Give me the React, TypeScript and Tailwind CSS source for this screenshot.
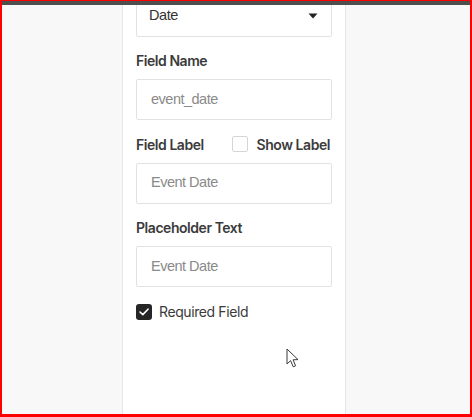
function Label({ children }: { children: React.ReactNode }) {
  return (
    <div className="h-[20px] mt-[14px] mb-[8.5px] flex items-center text-[14px] font-semibold tracking-[-0.45px] text-[#3b3b3b]">
      {children}
    </div>
  );
}

function TextInput({ placeholder }: { placeholder: string }) {
  return (
    <div className="h-[41px] border border-[#e2e2e2] rounded-[2px] bg-white flex items-center pl-[14px] text-[14.5px] tracking-[-0.5px] text-[#8a8a8a] font-['Liberation_Sans',Arial,sans-serif]">
      {placeholder}
    </div>
  );
}

function Cursor() {
  return (
    <svg
      className="absolute left-[284px] top-[347px]"
      width="14"
      height="21"
      viewBox="0 0 14 21"
    >
      <path
        d="M1 1 L1 16 L4.6 12.6 L7.2 18.8 L9.6 17.8 L7.1 11.8 L12 11.6 Z"
        fill="#ffffff"
        stroke="#3a3a3a"
        strokeWidth="1"
        strokeLinejoin="round"
      />
    </svg>
  );
}

export default function App() {
  return (
    <div
      className="relative w-[472px] h-[417px] overflow-hidden border-l-2 border-r-2 border-t border-b-[3px] border-[#ff0000] bg-[#f8f8f8] flex flex-col"
      style={{ fontFamily: "Inter, 'Noto Sans', sans-serif" }}
    >
      {/* top bar */}
      <div className="h-[4px] bg-[#4f4f4f] shrink-0" />

      <div className="flex flex-1 min-h-0">
        <div className="w-[120px]" />

        {/* settings panel */}
        <div className="w-[224px] bg-white border-x border-[#e6e6e6] px-[13px] overflow-hidden">
          <div className="-mt-[9.5px] h-[41px] border border-[#e2e2e2] rounded-[2px] flex items-center justify-between pl-[12px] pr-[13px] text-[14.5px] tracking-[-0.4px] text-[#333333] font-['Liberation_Sans',Arial,sans-serif]">
            <span>Date</span>
            <svg width="10" height="6" viewBox="0 0 10 6">
              <path d="M0.5 0.5 L9.5 0.5 L5 5.5 Z" fill="#222222" />
            </svg>
          </div>

          <Label>Field Name</Label>
          <TextInput placeholder="event_date" />

          <Label>
            <div className="flex w-full items-center justify-between pr-[2px]">
              <span>Field Label</span>
              <div className="flex items-center gap-[9px]">
                <div className="w-[16px] h-[16px] border border-[#d6d6d6] rounded-[2px] bg-white" />
                <span>Show Label</span>
              </div>
            </div>
          </Label>
          <TextInput placeholder="Event Date" />

          <Label>Placeholder Text</Label>
          <TextInput placeholder="Event Date" />

          <div className="mt-[14px] flex items-center gap-[7px]">
            <div className="w-[16px] h-[16px] rounded-[3px] bg-[#262626] flex items-center justify-center">
              <svg width="10" height="8" viewBox="0 0 10 8">
                <path
                  d="M1 4 L3.8 6.6 L9 1.2"
                  fill="none"
                  stroke="#ffffff"
                  strokeWidth="1.6"
                  strokeLinecap="round"
                  strokeLinejoin="round"
                />
              </svg>
            </div>
            <span className="text-[14px] tracking-[-0.4px] text-[#3a3a3a]">Required Field</span>
          </div>
        </div>

        <div className="flex-1" />
      </div>

      <Cursor />
    </div>
  );
}
